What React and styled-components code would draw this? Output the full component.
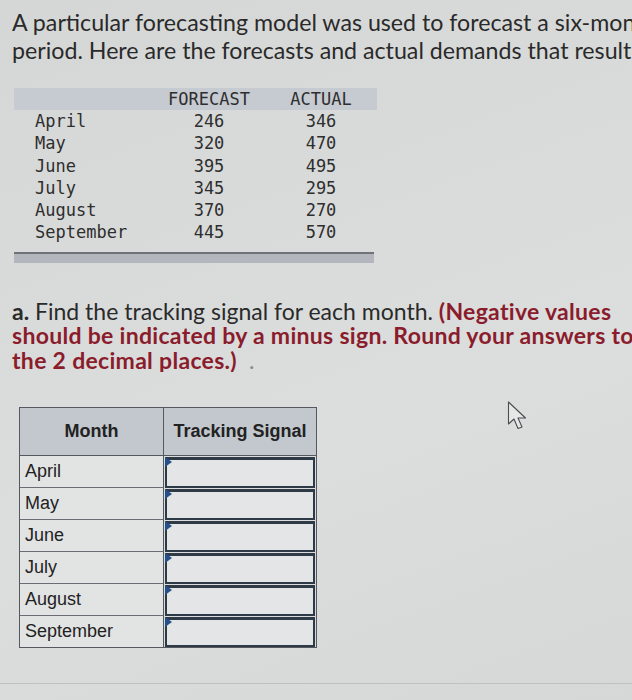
import React from "react";
import styled, { createGlobalStyle } from "styled-components";

const Global = createGlobalStyle`
  html, body {
    margin: 0;
    padding: 0;
    background: #d8dad9;
  }
  body {
    width: 632px;
    height: 700px;
    overflow: hidden;
  }
`;

const Page = styled.div`
  position: relative;
  width: 632px;
  height: 700px;
  overflow: hidden;
  background: linear-gradient(160deg, #d5d7d6 0%, #dcdedd 60%, #d6d8d7 100%);
  font-family: Lato, "Open Sans", sans-serif;
  color: #2a2a2a;
`;

const Intro = styled.p`
  margin: 0;
  padding: 8px 0 0 12px;
  font-size: 23.2px;
  line-height: 28px;
  white-space: nowrap;
  overflow: hidden;
`;

const DataTable = styled.div`
  margin: 24px 0 0 14px;
  width: 363px;
  font-family: "DejaVu Sans Mono", "Liberation Mono", monospace;
  font-size: 17px;
  color: #2e2e2e;
`;

const DataRow = styled.div`
  display: grid;
  grid-template-columns: 139px 112px 112px;
  height: ${(p) => (p.$head ? "22px" : "22.3px")};
  line-height: ${(p) => (p.$head ? "22px" : "22.3px")};
  background: ${(p) => (p.$head ? "#c6cad1" : "transparent")};
`;

const MonthCell = styled.span`
  padding-left: 21px;
`;

const NumCell = styled.span`
  text-align: center;
`;

const FootBar = styled.div`
  margin-top: 8px;
  width: 360px;
  height: 9px;
  background: #b3b7bd;
  border-top: 2px solid #6e7279;
`;

const Question = styled.p`
  margin: 36px 0 0 12px;
  font-size: 23px;
  line-height: 24.5px;
  white-space: nowrap;
  overflow: hidden;
`;

const Strong = styled.b`
  font-weight: 700;
`;

const Hint = styled.span`
  font-weight: 700;
  letter-spacing: 0.3px;
  color: #8a1c2c;
`;

const Faint = styled.span`
  color: #8a8a8a;
  margin-left: 12px;
`;

const AnswerTable = styled.div`
  margin: 35px 0 0 19px;
  width: 296px;
  display: grid;
  grid-template-columns: 143px 153px;
  font-family: "Liberation Sans", Arial, sans-serif;
  font-size: 18px;
  color: #222;
  border: 1px solid #55595f;
`;

const HeadCell = styled.div`
  box-sizing: border-box;
  height: 48px;
  display: flex;
  align-items: center;
  justify-content: center;
  background: #c3c7ce;
  font-weight: 700;
  border-left: ${(p) => (p.$split ? "1px solid #55595f" : "none")};
  border-bottom: 1px solid #55595f;
`;

const LabelCell = styled.div`
  box-sizing: border-box;
  height: ${(p) => (p.$last ? "31px" : "32px")};
  display: flex;
  align-items: center;
  padding-left: 5px;
  background: #e2e4e4;
  border-bottom: ${(p) => (p.$last ? "none" : "1px solid #6a6e74")};
`;

const InputCell = styled.div`
  position: relative;
  box-sizing: border-box;
  height: ${(p) => (p.$last ? "31px" : "32px")};
  border-left: 1px solid #55595f;
  padding: 1px 1px 0 1px;
`;

const InputBox = styled.div`
  box-sizing: border-box;
  height: 100%;
  background: #e3e5e6;
  border: 2px solid #2e3a48;
  border-top-width: 3px;
`;

const Flag = styled.span`
  position: absolute;
  left: 1px;
  top: 1px;
  width: 0;
  height: 0;
  border-top: 5px solid transparent;
  border-bottom: 5px solid transparent;
  border-left: 7px solid #24508a;
`;

const Cursor = styled.svg`
  position: absolute;
  left: 507px;
  top: 401px;
`;

const Divider = styled.div`
  position: absolute;
  left: 0;
  right: 0;
  top: 683px;
  height: 1px;
  background: #bfc1c0;
`;

const forecasts = [
  ["April", 246, 346],
  ["May", 320, 470],
  ["June", 395, 495],
  ["July", 345, 295],
  ["August", 370, 270],
  ["September", 445, 570],
];

export default function App() {
  return (
    <Page>
      <Global />
      <Intro>
        A particular forecasting model was used to forecast a six-month
        <br />
        period. Here are the forecasts and actual demands that resulted:
      </Intro>

      <DataTable>
        <DataRow $head>
          <MonthCell />
          <NumCell>FORECAST</NumCell>
          <NumCell>ACTUAL</NumCell>
        </DataRow>
        {forecasts.map(([m, f, a]) => (
          <DataRow key={m}>
            <MonthCell>{m}</MonthCell>
            <NumCell>{f}</NumCell>
            <NumCell>{a}</NumCell>
          </DataRow>
        ))}
        <FootBar />
      </DataTable>

      <Question>
        <Strong>a.</Strong> Find the tracking signal for each month.{" "}
        <Hint>(Negative values</Hint>
        <br />
        <Hint>should be indicated by a minus sign. Round your answers to</Hint>
        <br />
        <Hint>the 2 decimal places.)</Hint>
        <Faint>.</Faint>
      </Question>

      <AnswerTable>
        <HeadCell>Month</HeadCell>
        <HeadCell $split>Tracking Signal</HeadCell>
        {forecasts.map(([m], i) => {
          const last = i === forecasts.length - 1;
          return (
            <React.Fragment key={m}>
              <LabelCell $last={last}>{m}</LabelCell>
              <InputCell $last={last}>
                <InputBox />
                <Flag />
              </InputCell>
            </React.Fragment>
          );
        })}
      </AnswerTable>

      <Cursor width="24" height="32" viewBox="0 0 24 32">
        <path
          d="M1.5 1 L1.5 23 L7 18 L11 27.5 L15 26 L11 17 L18.5 17 Z"
          fill="#e6e8e8"
          stroke="#4a4c50"
          strokeWidth="1.1"
          strokeLinejoin="round"
        />
      </Cursor>

      <Divider />
    </Page>
  );
}
